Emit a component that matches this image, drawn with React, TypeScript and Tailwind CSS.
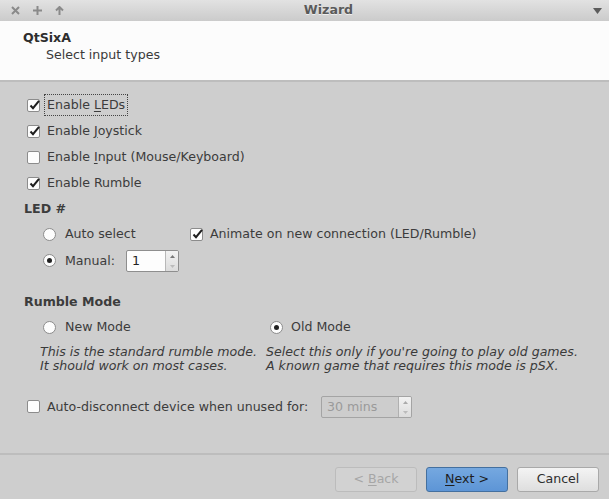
import React from 'react';

const font = { fontFamily: '"DejaVu Sans", "Liberation Sans", sans-serif' };

const CheckBox: React.FC<{ checked?: boolean }> = ({ checked }) => (
  <span className="relative inline-flex h-[13px] w-[13px] flex-shrink-0 items-center justify-center rounded-[2px] border border-[#8c8c8c] bg-[#fdfdfd]">
    {checked && (
      <svg width="13" height="13" viewBox="0 0 13 13" className="absolute -top-[2px] left-[0px]">
        <path d="M2.5 7.5 L5 10.2 L11 2.8" fill="none" stroke="#1e1e1e" strokeWidth="2" />
      </svg>
    )}
  </span>
);

const Radio: React.FC<{ checked?: boolean }> = ({ checked }) => (
  <span className="inline-flex h-[13px] w-[13px] flex-shrink-0 items-center justify-center rounded-full border border-[#8c8c8c] bg-[#fdfdfd]">
    {checked && <span className="h-[5px] w-[5px] rounded-full bg-[#222]" />}
  </span>
);

const SpinArrows: React.FC<{ disabled?: boolean }> = ({ disabled }) => (
  <div className={`flex w-[13px] flex-col border-l ${disabled ? 'border-[#b0b0b0]' : 'border-[#b8b8b8]'} bg-gradient-to-b from-[#f2f2f2] to-[#dcdcdc]`}>
    <div className="flex flex-1 items-center justify-center">
      <svg width="5" height="3" viewBox="0 0 5 3"><path d="M0 3 L2.5 0 L5 3Z" fill={disabled ? '#aaa' : '#777'} /></svg>
    </div>
    <div className="flex flex-1 items-center justify-center">
      <svg width="5" height="3" viewBox="0 0 5 3"><path d="M0 0 L2.5 3 L5 0Z" fill="#bbb" /></svg>
    </div>
  </div>
);

const App: React.FC = () => {
  return (
    <div className="flex h-[499px] w-[609px] flex-col overflow-hidden bg-[#cecece] text-[12.6px] text-[#3c3c3c]" style={font}>
      {/* title bar */}
      <div className="relative flex h-[21px] flex-shrink-0 items-center bg-gradient-to-b from-[#e2e2e2] to-[#cbcbcb]">
        <div className="flex items-center gap-[13px] pl-[11px]">
          <svg width="9" height="9" viewBox="0 0 9 9"><path d="M1 1 L8 8 M8 1 L1 8" stroke="#8a8a8a" strokeWidth="2" /></svg>
          <svg width="9" height="9" viewBox="0 0 9 9"><path d="M4.5 0 V9 M0 4.5 H9" stroke="#8a8a8a" strokeWidth="2" /></svg>
          <svg width="9" height="9" viewBox="0 0 9 9"><path d="M4.5 9 V1.5 M1 4.5 L4.5 1 L8 4.5" fill="none" stroke="#8a8a8a" strokeWidth="2" /></svg>
        </div>
        <div className="flex-1 text-center font-bold text-[#5a5a5a] [text-shadow:0_1px_0_#eee]">Wizard</div>
        <div className="pr-[7px]">
          <svg width="9" height="6" viewBox="0 0 9 6"><path d="M0 0 H9 L4.5 6Z" fill="#5c5c5c" /></svg>
        </div>
      </div>

      {/* header */}
      <div className="flex h-[61px] flex-shrink-0 flex-col border-b-2 border-[#bdbdbd] bg-[#fcfcfc] pl-[23px] pt-[9px]">
        <div className="font-bold leading-[16px] text-[#2e2e2e]">QtSixA</div>
        <div className="pl-[23px] pt-[1px] leading-[16px] text-[#3a3a3a]">Select input types</div>
      </div>

      {/* body */}
      <div className="flex flex-1 flex-col pl-[27px] pt-[10px]">
        <div className="flex h-[26px] items-center gap-[7px]">
          <CheckBox checked />
          <span className="-ml-[3px] border border-dotted border-[#444] px-[2px] py-[1px]">
            Enable <span className="underline underline-offset-2">L</span>EDs
          </span>
        </div>
        <div className="flex h-[26px] items-center gap-[7px]">
          <CheckBox checked />
          <span>Enable <span className="underline underline-offset-2">J</span>oystick</span>
        </div>
        <div className="flex h-[26px] items-center gap-[7px]">
          <CheckBox />
          <span>Enable <span className="underline underline-offset-2">I</span>nput (Mouse/Keyboard)</span>
        </div>
        <div className="flex h-[26px] items-center gap-[7px]">
          <CheckBox checked />
          <span>Enable Rumble</span>
        </div>

        <div className="-ml-[3px] flex h-[26px] items-center font-bold">LED #</div>
        <div className="flex h-[25px] items-center pl-[16px]">
          <div className="flex w-[147px] items-center gap-[9px]">
            <Radio />
            <span>Auto select</span>
          </div>
          <div className="flex items-center gap-[7px]">
            <CheckBox checked />
            <span>Animate on new connection (LED/Rumble)</span>
          </div>
        </div>
        <div className="flex h-[28px] items-center pl-[16px]">
          <div className="flex items-center gap-[9px]">
            <Radio checked />
            <span>Manual:</span>
          </div>
          <div className="ml-[11px] flex h-[22px] w-[53px] overflow-hidden rounded-[2px] border border-[#8e8e8e] bg-[#fdfdfd]">
            <div className="flex flex-1 items-center pl-[5px] text-[#222]">1</div>
            <SpinArrows />
          </div>
        </div>

        <div className="-ml-[3px] mt-[14px] flex h-[26px] items-center font-bold">Rumble Mode</div>
        <div className="flex pl-[13px]">
          <div className="flex w-[226px] flex-col">
            <div className="flex h-[24px] items-center gap-[9px] pl-[3px]">
              <Radio />
              <span>New Mode</span>
            </div>
            <div className="mt-[6px] italic leading-[14px] text-[#3a3a3a]">
              This is the standard rumble mode.
              <br />
              It should work on most cases.
            </div>
          </div>
          <div className="flex flex-col">
            <div className="flex h-[24px] items-center gap-[8px] pl-[4px]">
              <Radio checked />
              <span>Old Mode</span>
            </div>
            <div className="mt-[6px] italic leading-[14px] text-[#3a3a3a]">
              Select this only if you're going to play old games.
              <br />
              A known game that requires this mode is pSX.
            </div>
          </div>
        </div>

        <div className="mt-[23px] flex h-[22px] items-center">
          <div className="flex w-[294px] items-center gap-[7px]">
            <CheckBox />
            <span>Auto-disconnect device when unused for:</span>
          </div>
          <div className="flex h-[22px] w-[91px] overflow-hidden rounded-[2px] border border-[#a4a4a4] bg-[#cdcdcd]">
            <div className="flex flex-1 items-center pl-[5px] text-[#9a9a9a]">30 mins</div>
            <SpinArrows disabled />
          </div>
        </div>
      </div>

      {/* footer */}
      <div className="flex h-[46px] flex-shrink-0 justify-end gap-[9px] border-t-2 border-[#bdbdbd] pr-[10px] pt-[12px]">
        <button className="h-[25px] w-[82px] rounded-[3px] border border-[#bcbcbc] bg-[#d2d2d2] text-[#a6a6a6]">
          &lt; <span className="underline underline-offset-2">B</span>ack
        </button>
        <button className="h-[25px] w-[82px] rounded-[3px] border border-[#44709f] bg-gradient-to-b from-[#75a8e0] to-[#5d95d6] text-[#1e1e1e]">
          <span className="underline underline-offset-2">N</span>ext &gt;
        </button>
        <button className="h-[25px] w-[82px] rounded-[3px] border border-[#a9a9a9] bg-gradient-to-b from-[#f4f4f4] to-[#dedede] text-[#2e2e2e]">
          Cancel
        </button>
      </div>
    </div>
  );
};

export default App;
